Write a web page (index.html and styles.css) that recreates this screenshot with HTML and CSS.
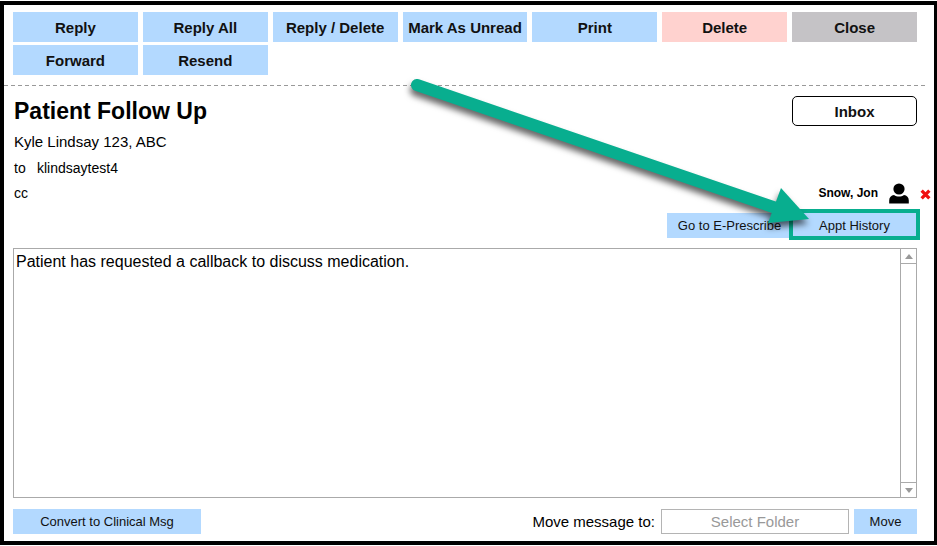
FILE: index.html
```html
<!DOCTYPE html>
<html lang="en">
<head>
<meta charset="utf-8">
<title>Patient Follow Up</title>
<link rel="stylesheet" href="styles.css">
</head>
<body>

<div class="message-window">
  <div class="actions">
    <button type="button">Reply</button>
    <button type="button">Reply All</button>
    <button type="button">Reply / Delete</button>
    <button type="button">Mark As Unread</button>
    <button type="button">Print</button>
    <button type="button" class="delete">Delete</button>
    <button type="button" class="close">Close</button>
    <button type="button">Forward</button>
    <button type="button">Resend</button>
  </div>

  <div class="divider"></div>

  <div class="header">
    <div class="details">
      <h1>Patient Follow Up</h1>
      <div class="from">Kyle Lindsay 123, ABC</div>
      <div class="line"><span class="label">to</span>klindsaytest4</div>
    </div>
    <button type="button" class="inbox">Inbox</button>
  </div>

  <div class="cc-row">
    <span class="cc">cc</span>
    <span class="patient">Snow, Jon</span>
    <svg class="person" width="20" height="21" viewBox="0 0 20 21">
      <circle cx="10" cy="6" r="5.6"/>
      <path d="M0.2 20.500v-3c0-3.400 2-5 4.800-5.500 3 2 7 2 10 0 2.800 0.500 4.800 2.100 4.800 5.500v3z"/>
    </svg>
    <svg class="remove" width="11" height="11" viewBox="0 0 10 10">
      <path d="M1.500 1.500l7 7M8.500 1.500l-7 7"/>
    </svg>
  </div>

  <div class="links">
    <button type="button" class="small prescribe">Go to E-Prescribe</button>
    <div class="highlight">
      <button type="button" class="small">Appt History</button>
      <svg class="arrow" width="420" height="160" viewBox="0 0 420 160">
        <path class="shaft" d="M18 18L380 142"/>
        <path class="head" d="M382 121L410 152L369 156z"/>
      </svg>
    </div>
  </div>

  <div class="body">
    <textarea aria-label="Message">Patient has requested a callback to discuss medication.</textarea>
    <div class="scrollbar">
      <span class="up"><svg width="8" height="5" viewBox="0 0 8 5"><path d="M0 5l4-5 4 5z"/></svg></span>
      <span class="down"><svg width="8" height="5" viewBox="0 0 8 5"><path d="M0 0l4 5 4-5z"/></svg></span>
    </div>
  </div>

  <div class="footer">
    <button type="button" class="small convert">Convert to Clinical Msg</button>
    <label for="folder">Move message to:</label>
    <input type="text" id="folder" placeholder="Select Folder">
    <button type="button" class="small move">Move</button>
  </div>
</div>

</body>
</html>
```
FILE: styles.css
```css
* {box-sizing: border-box;}
html, body {height: 100%; margin: 0;}
body {background: #fff; color: #000; font-family: "Liberation Sans", Arial, sans-serif; font-size: 15px; padding: 1px 0 2px;}
button {border: 0; margin: 0; padding: 0; background: #b3d9ff; color: #111; font-family: inherit; font-size: 15px; font-weight: bold; cursor: pointer;}
svg {display: block;}

.message-window {min-height: 100%; border: 4px solid #000; border-right-width: 3px; padding: 7px 17px 7px 9px; display: flex; flex-direction: column;}

.actions {display: grid; grid-template-columns: repeat(7, 1fr); gap: 3px 5px;}
.actions button {height: 30px;}
.actions .delete {background: #ffd2cf;}
.actions .close {background: #c5c3c6;}
.divider {height: 1px; margin: 10px -10px 0 -9px; background: repeating-linear-gradient(90deg, #999 0 4px, transparent 4px 7px);}

.header {display: flex; justify-content: space-between; align-items: flex-start; margin-top: 10px;}
.header h1 {margin: 0; font-size: 23px; line-height: 30px;}
.details {padding-left: 1px;}
.from {line-height: 32px;}
.line {font-size: 14px; line-height: 20px;}
.label {display: inline-block; width: 23px;}
.inbox {width: 125px; height: 30px; background: #fff; border: 1px solid #000; border-radius: 5px;}

.cc-row {display: flex; align-items: center; height: 24px; margin: 3px -14px 0 1px; font-size: 14px;}
.cc {flex: 1;}
.patient {font-size: 12px; font-weight: bold; margin-right: 11px;}
.remove {margin: 3px 0 0 11px; stroke: #f01010; stroke-width: 3; fill: none;}

.links {display: flex; justify-content: flex-end; margin-top: 8px;}
.small {height: 25px; font-size: 13px; font-weight: normal;}
.prescribe {width: 125px;}
.highlight {position: relative; width: 125px;}
.highlight:before {content: ""; position: absolute; top: -4px; right: -3px; bottom: -2px; left: -3px; border: 4px solid #08ae8f; pointer-events: none;}
.highlight .small {width: 100%;}
.arrow {position: absolute; right: 98px; top: -146px; overflow: visible; pointer-events: none; filter: drop-shadow(-1px 5px 3px rgba(0,0,0,.6));}
.shaft {stroke: #08ae8f; stroke-width: 12; stroke-linecap: round;}
.head {fill: #08ae8f;}

.body {flex: 1; display: flex; min-height: 250px; margin-top: 10px; border: 1px solid #aaa;}
.body textarea {flex: 1; border: 0; margin: 0; padding: 4px 2px; resize: none; outline: none; font: 16px/18px "Liberation Sans", Arial, sans-serif; color: #000;}
.scrollbar {width: 16px; border-left: 1px solid #aaa; display: flex; flex-direction: column; justify-content: space-between;}
.scrollbar span {height: 15px; display: flex; align-items: center; justify-content: center;}
.scrollbar .up {border-bottom: 1px solid #aaa;}
.scrollbar .down {border-top: 1px solid #aaa;}
.scrollbar svg {fill: #999;}

.footer {display: flex; align-items: center; margin-top: 11px;}
.convert {width: 188px; margin-right: auto;}
.footer input {width: 188px; height: 25px; margin: 0 5px 0 6px; padding: 0; border: 1px solid #b4b4b4; text-align: center; font: 15px "Liberation Sans", Arial, sans-serif;}
.footer input::placeholder {color: #999; opacity: 1;}
.move {width: 63px;}
```
